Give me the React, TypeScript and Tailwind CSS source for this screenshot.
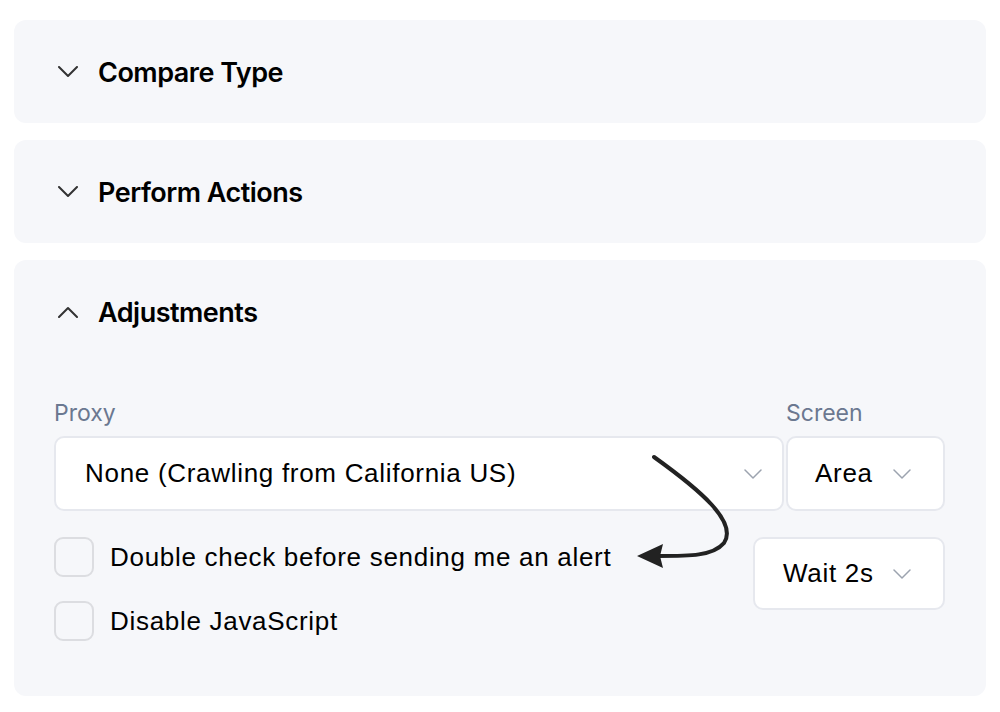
import { useState } from 'react'

const heading = { fontFamily: 'Inter, "Noto Sans", sans-serif' }
const body = { fontFamily: '"Liberation Sans", Arial, sans-serif' }

function Chevron({ up = false }: { up?: boolean }) {
  return (
    <svg width="20" height="12" viewBox="0 0 20 12" fill="none" stroke="#333" strokeWidth={2} strokeLinecap="round" strokeLinejoin="round">
      <path d={up ? 'M1 11 L10 2 L19 11' : 'M1 1 L10 10 L19 1'} />
    </svg>
  )
}

function SmallChevron() {
  return (
    <svg width="18" height="10" viewBox="0 0 18 10" fill="none" stroke="#9ca3af" strokeWidth={1.5} strokeLinecap="round" strokeLinejoin="round">
      <path d="M1 1 L9 9 L17 1" />
    </svg>
  )
}

function PanelHeader({ title, open }: { title: string; open?: boolean }) {
  return (
    <div className="flex h-[103px] items-center gap-[20px] pl-[44px]">
      <Chevron up={open} />
      <span className="mt-[4px] text-[27px] font-semibold tracking-[-0.5px] text-black" style={heading}>{title}</span>
    </div>
  )
}

function Checkbox({ label }: { label: string }) {
  const [on, setOn] = useState(false)
  return (
    <label className="flex items-center gap-[16px] cursor-pointer">
      <span
        onClick={() => setOn(!on)}
        className={`size-[40px] rounded-[9px] border-2 ${on ? 'border-gray-500 bg-gray-800' : 'border-[#dcdde1] bg-transparent'}`}
      />
      <span className="text-[26px] tracking-[0.7px] text-black" style={body}>{label}</span>
    </label>
  )
}

export default function App() {
  return (
    <div className="relative min-h-[712px] bg-white px-[14px] pt-[20px]" style={body}>
      <div className="flex flex-col gap-[17px]">
        <div className="rounded-[12px] bg-[#f6f7fa]">
          <PanelHeader title="Compare Type" />
        </div>
        <div className="rounded-[12px] bg-[#f6f7fa]">
          <PanelHeader title="Perform Actions" />
        </div>
        <div className="rounded-[12px] bg-[#f6f7fa] pb-[55px]">
          <PanelHeader title="Adjustments" open />
          <div className="pl-[40px] pr-[41px] pt-[36px]">
            <div className="flex gap-[2px]">
              <div className="flex-1">
                <div className="mb-[9px] h-[28px] text-[23px] leading-7 text-[#6b7890]" style={heading}>Proxy</div>
                <div className="flex h-[75px] items-center justify-between rounded-[10px] border-2 border-[#e6e8ee] bg-white pl-[29px] pr-[20px]">
                  <span className="text-[26px] tracking-[0.7px] text-black">None (Crawling from California US)</span>
                  <SmallChevron />
                </div>
              </div>
              <div className="w-[159px]">
                <div className="mb-[9px] h-[28px] text-[23px] leading-7 text-[#6b7890]" style={heading}>Screen</div>
                <div className="flex h-[75px] items-center justify-between rounded-[10px] border-2 border-[#e6e8ee] bg-white pl-[27px] pr-[32px]">
                  <span className="text-[26px] tracking-[0.7px] text-black">Area</span>
                  <SmallChevron />
                </div>
              </div>
            </div>
            <div className="mt-[26px] flex items-start justify-between">
              <div className="flex flex-col gap-[24px]">
                <Checkbox label="Double check before sending me an alert" />
                <Checkbox label="Disable JavaScript" />
              </div>
              <div className="flex h-[73px] w-[192px] items-center justify-between rounded-[10px] border-2 border-[#e6e8ee] bg-white pl-[28px] pr-[32px]">
                <span className="text-[26px] tracking-[0.7px] text-black">Wait 2s</span>
                <SmallChevron />
              </div>
            </div>
          </div>
        </div>
      </div>

      {/* hand-drawn arrow pointing at the double check option */}
      <svg className="pointer-events-none absolute left-0 top-0" width="1000" height="712" viewBox="0 0 1000 712" fill="none">
        <path d="M654 457 C 700 490 738 522 724 543 C 713 556 690 556 658 556" stroke="#222" strokeWidth={4} strokeLinecap="round" />
        <path d="M637 556 L663 544 L660 556 L663 568 Z" fill="#222" />
      </svg>
    </div>
  )
}
